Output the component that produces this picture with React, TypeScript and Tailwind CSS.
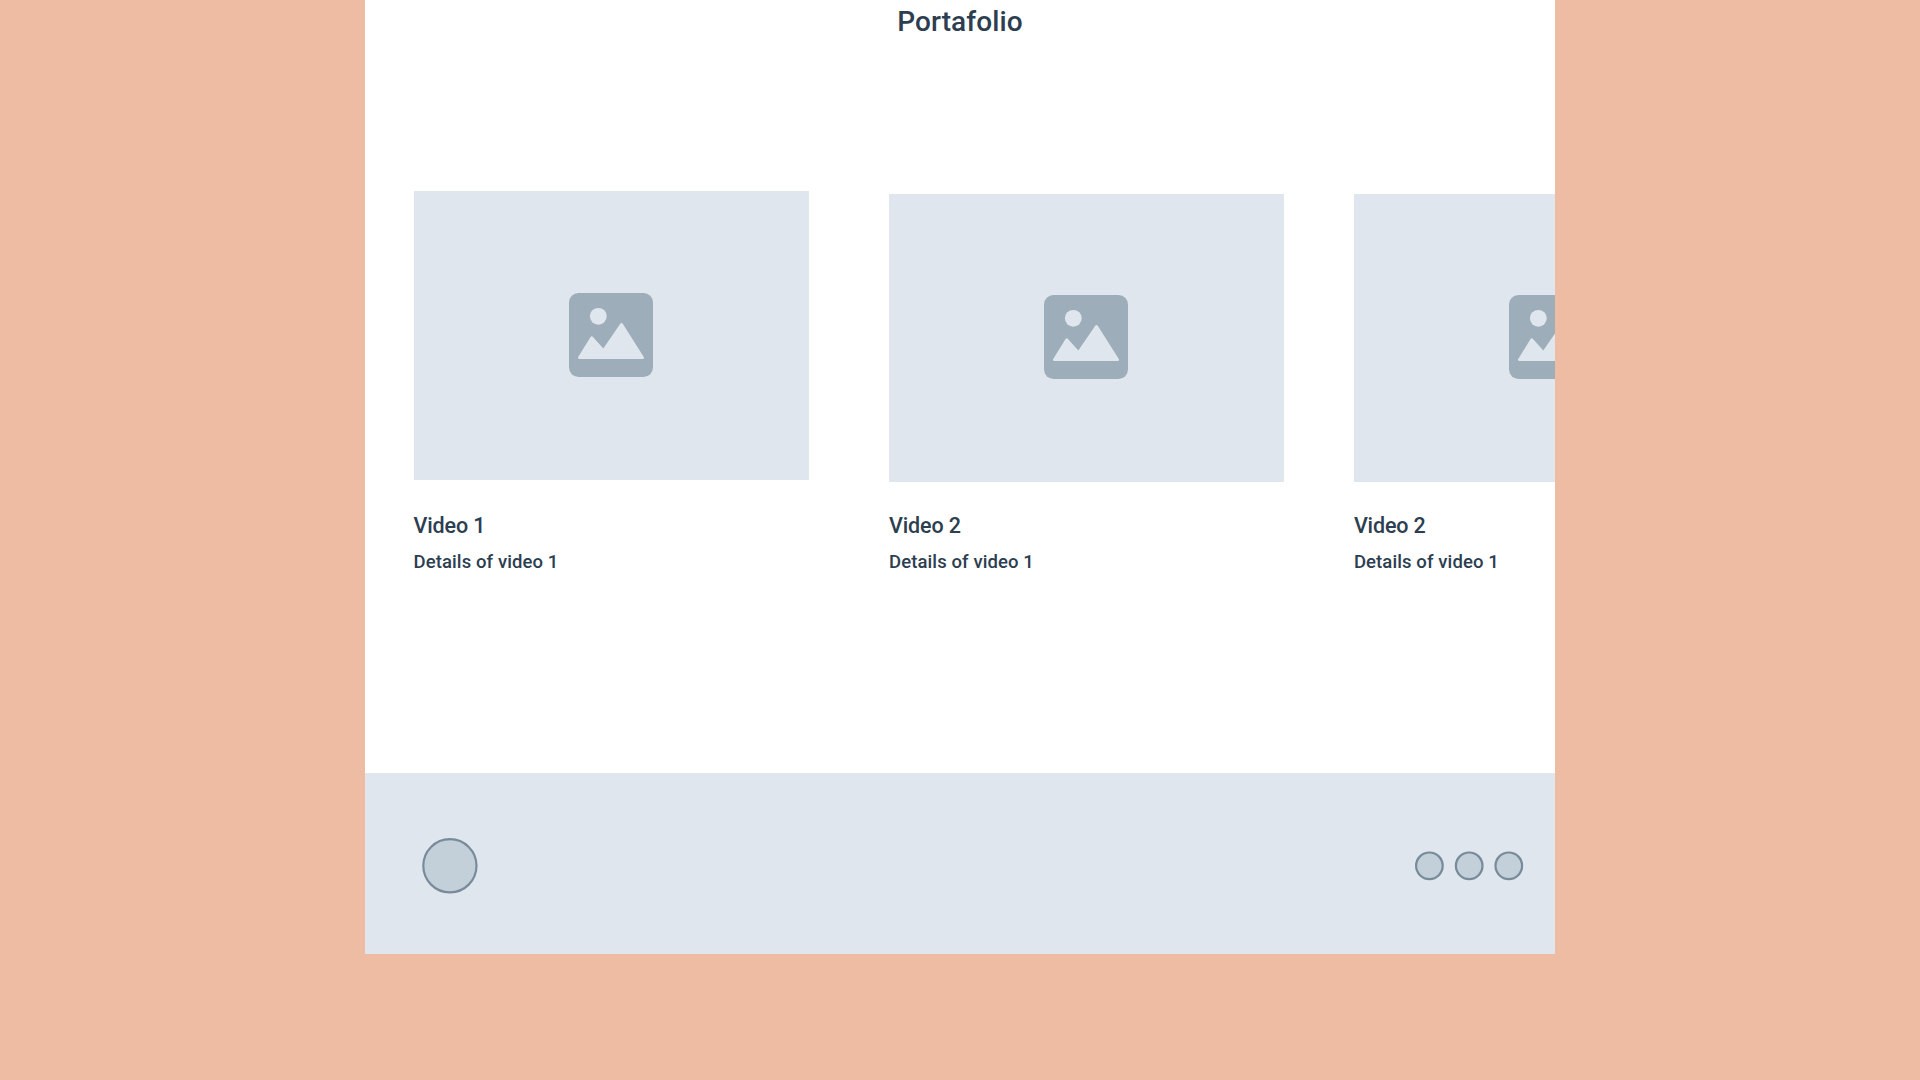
type Video = { title: string; details: string; image: string; titleGap: string };

const videos: Video[] = [
  { title: 'Video 1', details: 'Details of video 1', image: 'mt-[191px] h-[288.5px]', titleGap: 'mt-[33.5px]' },
  { title: 'Video 2', details: 'Details of video 1', image: 'mt-[193.5px] h-[288.5px] pr-px pb-[1.5px]', titleGap: 'mt-[31px]' },
  { title: 'Video 2', details: 'Details of video 1', image: 'mt-[193.5px] h-[288.5px] pr-px pb-[1.5px]', titleGap: 'mt-[31px]' },
];

function PictureIcon() {
  return (
    <svg width="84" height="84" viewBox="0 0 84 84" className="shrink-0">
      <rect width="84" height="84" rx="9.5" fill="#9eadba" />
      <circle cx="29.3" cy="23.3" r="8.4" fill="#dfe6ee" />
      <path
        d="M10.3 64.8 L22.8 44.5 L34.5 57.5 L52.5 31.3 L73.7 64.8 Z"
        fill="#dfe6ee"
        stroke="#dfe6ee"
        strokeWidth="2.6"
        strokeLinejoin="round"
      />
    </svg>
  );
}

function VideoCard({ video }: { video: Video }) {
  return (
    <article className="w-[395px] shrink-0">
      <div className={`flex items-center justify-center bg-[#dfe6ee] ${video.image}`}>
        <PictureIcon />
      </div>
      <h2 className={`h-[26px] whitespace-nowrap text-[21.5px] leading-[26px] tracking-[-0.15px] ${video.titleGap}`}>
        {video.title}
      </h2>
      <p className="mt-[12px] whitespace-nowrap text-[18.5px] leading-[22px] tracking-[0.1px]">{video.details}</p>
    </article>
  );
}

function Dot({ cx, size, r }: { cx: number; size: number; r: number }) {
  return (
    <svg width={size} height={size} viewBox={`0 0 ${size} ${size}`}>
      <circle cx={cx} cy={size / 2 - 0.2} r={r} fill="#c3cfd9" stroke="#788b9a" strokeWidth="2.2" />
    </svg>
  );
}

export default function App() {
  return (
    <div className="h-[1080px] w-[1920px] overflow-hidden bg-[#eebba3] pl-[365px] font-['Roboto',sans-serif] font-medium text-[#2c3e50]">
      <div className="flex h-[954px] w-[1190px] flex-col overflow-hidden bg-white">
        <main className="grid h-[773px] shrink-0 grid-cols-1 grid-rows-1">
          <h1 className="col-start-1 row-start-1 mt-[6px] h-8 text-center text-[28px] leading-8 tracking-[0.1px]">Portafolio</h1>
          <div className="col-start-1 row-start-1 flex min-w-0 pl-[48.5px]">
            <VideoCard video={videos[0]} />
            <div className="w-[80.5px] shrink-0" />
            <VideoCard video={videos[1]} />
            <div className="w-[69.9px] shrink-0" />
            <VideoCard video={videos[2]} />
          </div>
        </main>
        <footer className="flex h-[181px] shrink-0 items-center justify-between bg-[#dfe6ee] pt-[5px] pr-[30px] pl-[56px]">
          <Dot cx={28.9} size={58} r={26.6} />
          <div className="flex gap-2">
            <Dot cx={16.4} size={32} r={13.3} />
            <Dot cx={16.2} size={32} r={13.3} />
            <Dot cx={15.8} size={32} r={13.3} />
          </div>
        </footer>
      </div>
    </div>
  );
}
